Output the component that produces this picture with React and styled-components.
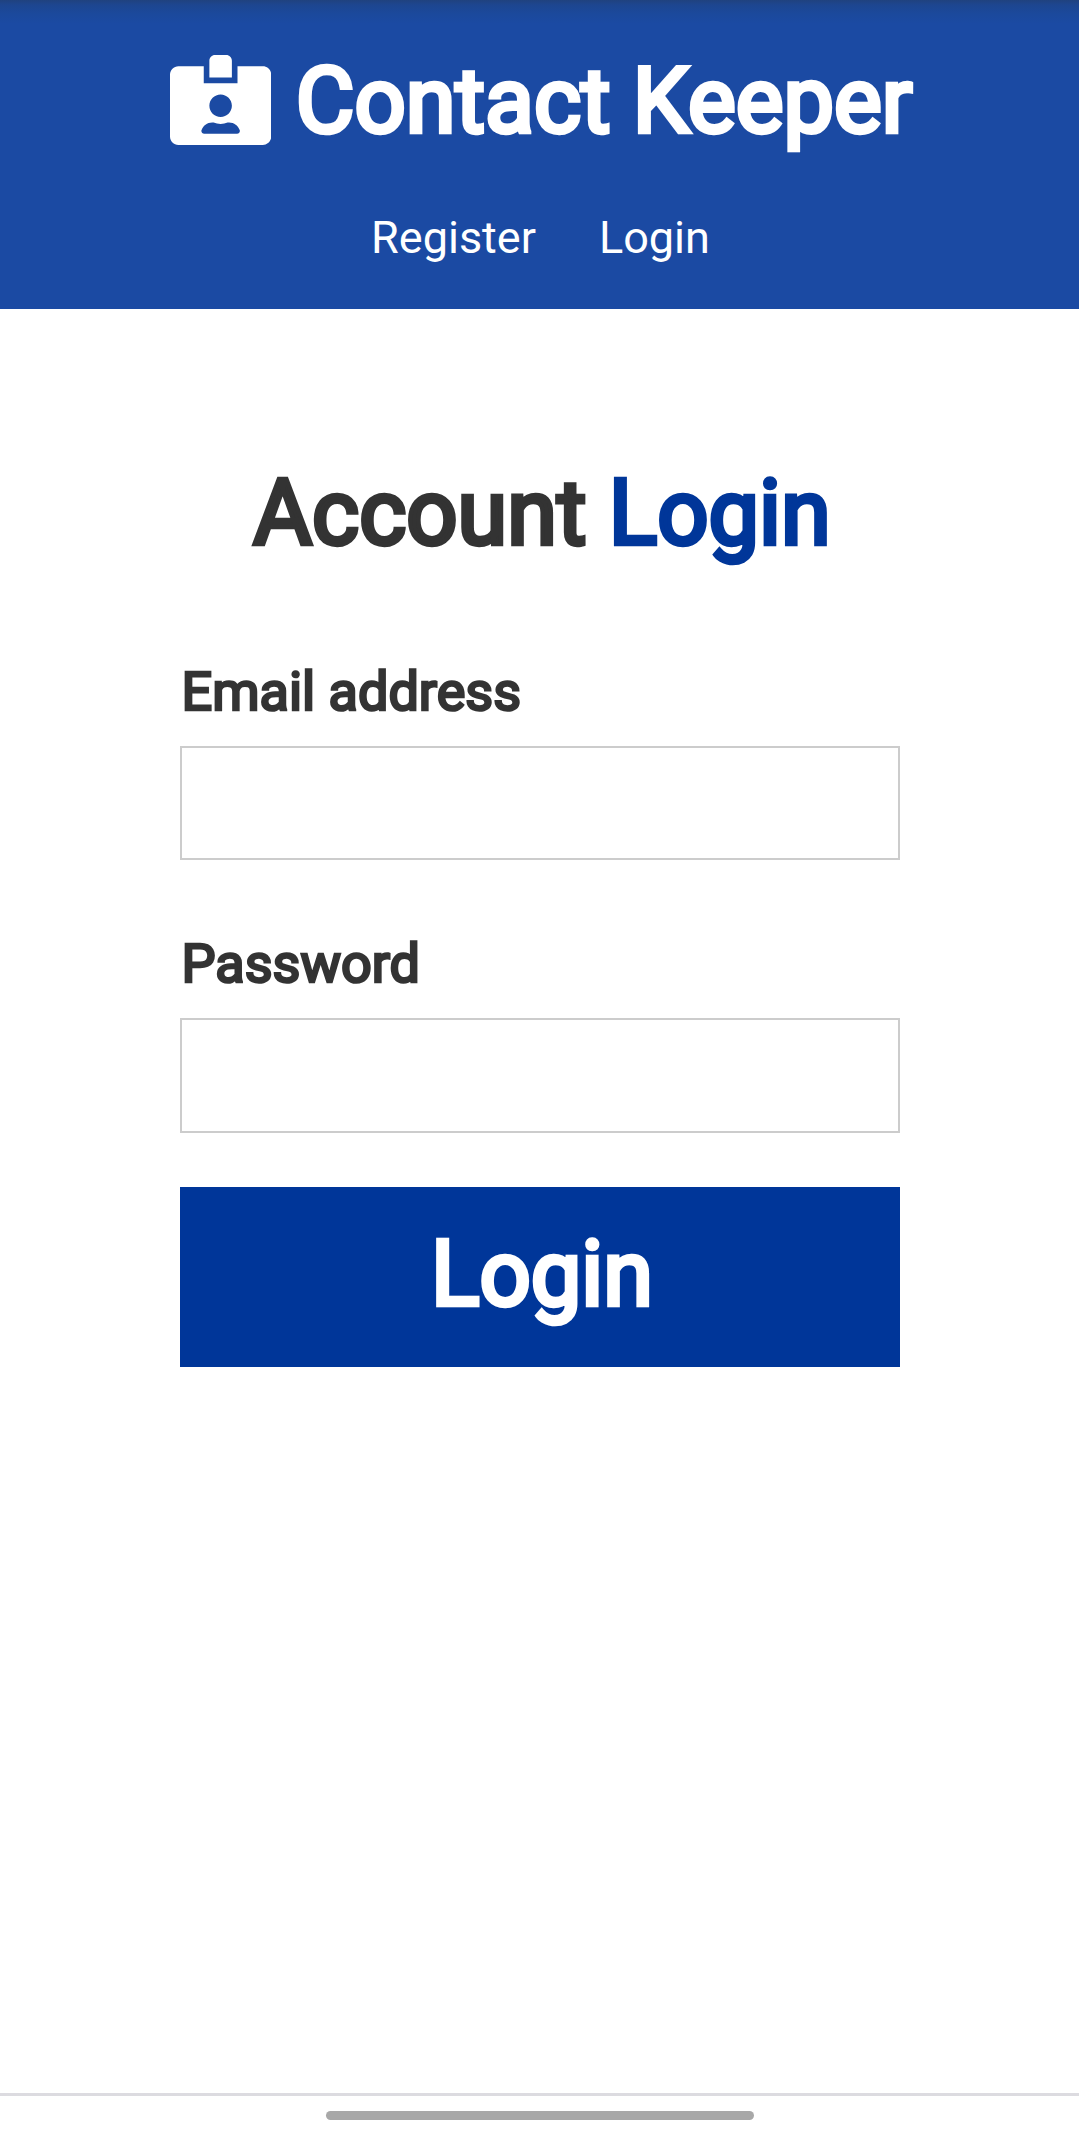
import React from "react";
import styled, { createGlobalStyle, css } from "styled-components";
import { FaIdCardAlt } from "react-icons/fa";

const GlobalStyle = createGlobalStyle`
  * { box-sizing: border-box; margin: 0; padding: 0; }
  body {
    font-family: Roboto, "Liberation Sans", sans-serif;
    font-size: 45px;
    color: #333;
    background: #fff;
  }
`;

const heavy = css`
  font-weight: 400;
  -webkit-text-stroke: ${(p) => p.$stroke || 4.5}px currentColor;
`;

const Page = styled.div`
  min-height: 2138px;
  display: flex;
  flex-direction: column;
`;

const Navbar = styled.header`
  height: 309px;
  padding-top: 48px;
  display: flex;
  flex-direction: column;
  align-items: center;
  gap: 55px;
  color: #fff;
  background: linear-gradient(#20427f 0, #1d4690 5px, #1b499c 14px, #1b4aa3 24px);
`;

const Brand = styled.h1`
  ${heavy}
  padding-left: 3px;
  font-size: 90px;
  line-height: 108px;
  white-space: nowrap;

  svg {
    width: 101.25px;
    height: 90px;
    margin-right: 2.6px;
    vertical-align: -13px;
    stroke: none;
    stroke-width: 0;
  }
`;

const Nav = styled.nav`
  display: flex;
  gap: 63px;
  padding-left: 2px;
  line-height: 54px;
`;

const NavLink = styled.a`
  color: #fff;
  text-decoration: none;
`;

const Main = styled.main`
  flex: 1;
  width: 720px;
  margin: 0 auto;
  padding-top: 151px;
`;

const Title = styled.h1`
  ${heavy}
  padding-left: 5px;
  font-size: 90px;
  line-height: 108px;
  text-align: center;
  white-space: nowrap;
`;

const Accent = styled.span`
  color: #003699;
`;

const Form = styled.form`
  margin-top: 88px;
`;

const Field = styled.div`
  margin-bottom: ${(p) => p.$gap}px;
`;

const Label = styled.label`
  ${heavy}
  display: block;
  padding-left: 2px;
  font-size: 54px;
  line-height: 72px;
  margin-bottom: 18px;
`;

const Input = styled.input`
  display: block;
  width: 100%;
  height: ${(p) => p.$height}px;
  padding: 20px;
  font: inherit;
  border: 2px solid #ccc;
  border-radius: 0;
  outline: none;
  background: #fff;
`;

const Submit = styled.button`
  ${heavy}
  display: block;
  width: 100%;
  height: 180px;
  padding: 0 0 4px 5px;
  border: 0;
  color: #fff;
  background: #003699;
  font-family: inherit;
  font-size: 90px;
  line-height: 108px;
`;

const SystemBar = styled.footer`
  height: 45px;
  padding-top: 15px;
  border-top: 3px solid #dcdbe0;
`;

const Handle = styled.div`
  width: 428px;
  height: 9px;
  margin: 0 auto;
  border-radius: 5px;
  background: #a8a8a8;
`;

export default function App() {
  return (
    <Page>
      <GlobalStyle />
      <Navbar>
        <Brand>
          <FaIdCardAlt /> Contact Keeper
        </Brand>
        <Nav>
          <NavLink>Register</NavLink>
          <NavLink>Login</NavLink>
        </Nav>
      </Navbar>
      <Main>
        <Title>
          Account <Accent>Login</Accent>
        </Title>
        <Form>
          <Field $gap={68}>
            <Label $stroke={2.6} htmlFor="email">Email address</Label>
            <Input $height={114} id="email" type="email" />
          </Field>
          <Field $gap={54}>
            <Label $stroke={2.6} htmlFor="password">Password</Label>
            <Input $height={115} id="password" type="password" />
          </Field>
          <Submit type="button">Login</Submit>
        </Form>
      </Main>
      <SystemBar>
        <Handle />
      </SystemBar>
    </Page>
  );
}
